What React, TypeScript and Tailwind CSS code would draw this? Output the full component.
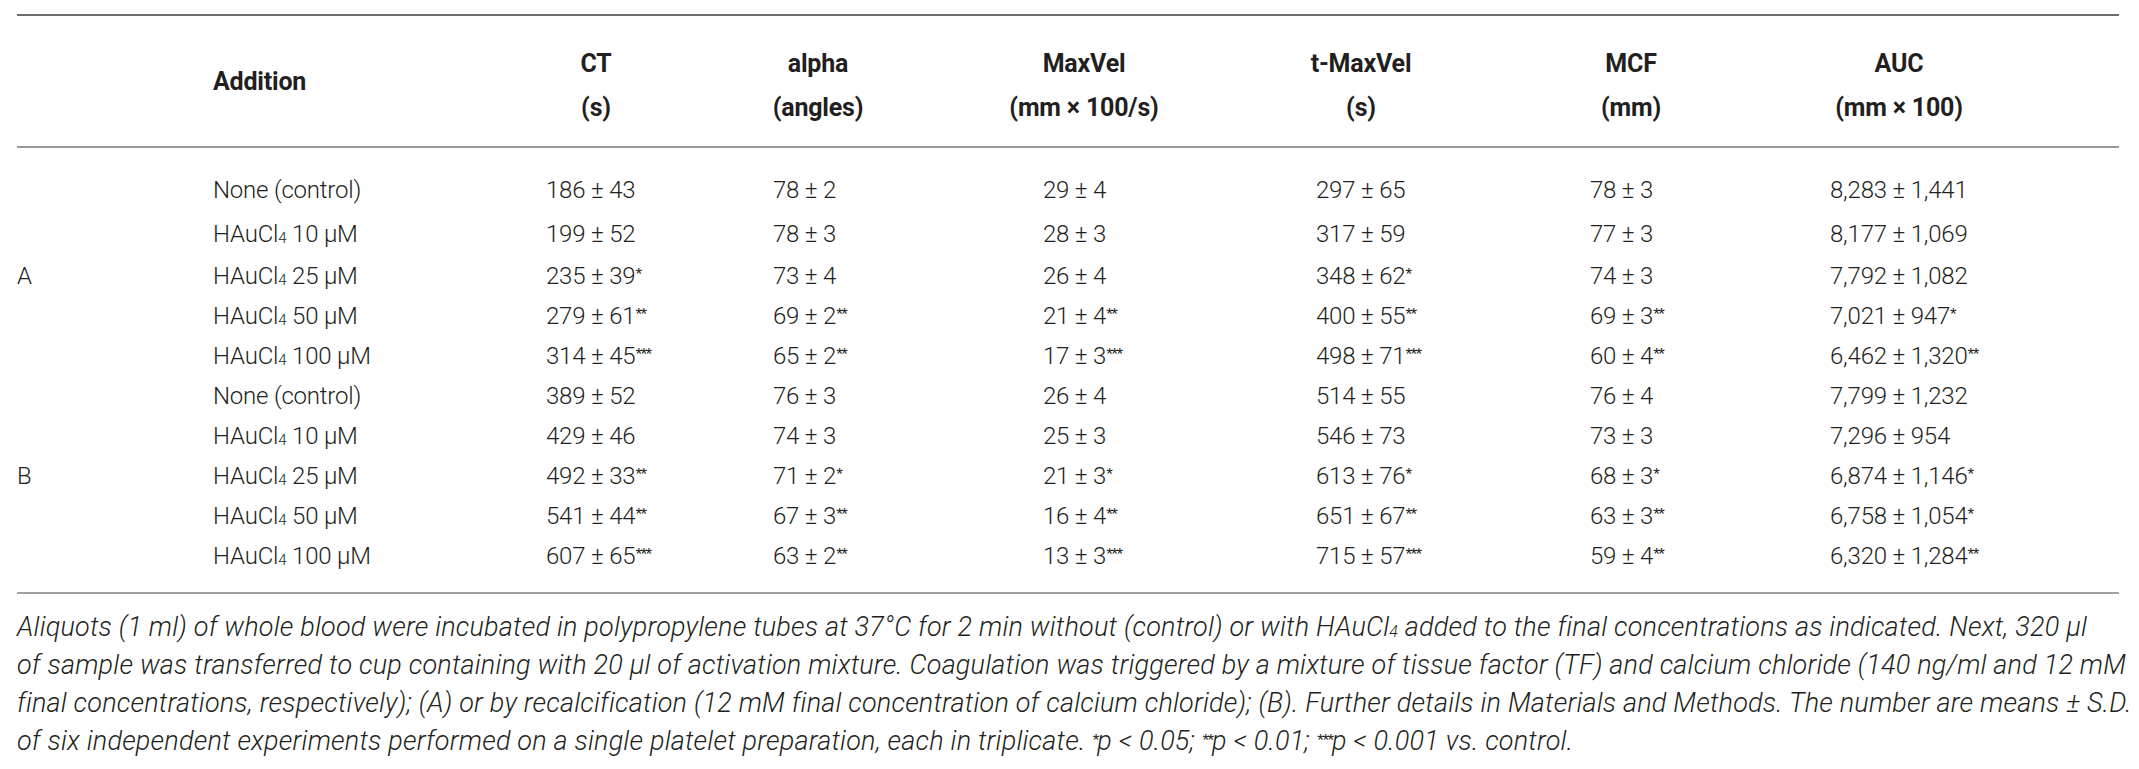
const font = { fontFamily: 'Roboto, "Liberation Sans", Arial, sans-serif' };

type Cell = [string, string?];

type Row = {
    group?: string;
    conc?: string;
    cells: Cell[];
    tall?: boolean;
};

const rows: Row[] = [
    { cells: [['186 ± 43'], ['78 ± 2'], ['29 ± 4'], ['297 ± 65'], ['78 ± 3'], ['8,283 ± 1,441']], tall: true },
    { conc: '10', cells: [['199 ± 52'], ['78 ± 3'], ['28 ± 3'], ['317 ± 59'], ['77 ± 3'], ['8,177 ± 1,069']], tall: true },
    { group: 'A', conc: '25', cells: [['235 ± 39', '*'], ['73 ± 4'], ['26 ± 4'], ['348 ± 62', '*'], ['74 ± 3'], ['7,792 ± 1,082']] },
    { conc: '50', cells: [['279 ± 61', '**'], ['69 ± 2', '**'], ['21 ± 4', '**'], ['400 ± 55', '**'], ['69 ± 3', '**'], ['7,021 ± 947', '*']] },
    { conc: '100', cells: [['314 ± 45', '***'], ['65 ± 2', '**'], ['17 ± 3', '***'], ['498 ± 71', '***'], ['60 ± 4', '**'], ['6,462 ± 1,320', '**']] },
    { cells: [['389 ± 52'], ['76 ± 3'], ['26 ± 4'], ['514 ± 55'], ['76 ± 4'], ['7,799 ± 1,232']] },
    { conc: '10', cells: [['429 ± 46'], ['74 ± 3'], ['25 ± 3'], ['546 ± 73'], ['73 ± 3'], ['7,296 ± 954']] },
    { group: 'B', conc: '25', cells: [['492 ± 33', '**'], ['71 ± 2', '*'], ['21 ± 3', '*'], ['613 ± 76', '*'], ['68 ± 3', '*'], ['6,874 ± 1,146', '*']] },
    { conc: '50', cells: [['541 ± 44', '**'], ['67 ± 3', '**'], ['16 ± 4', '**'], ['651 ± 67', '**'], ['63 ± 3', '**'], ['6,758 ± 1,054', '*']] },
    { conc: '100', cells: [['607 ± 65', '***'], ['63 ± 2', '**'], ['13 ± 3', '***'], ['715 ± 57', '***'], ['59 ± 4', '**'], ['6,320 ± 1,284', '**']] },
];

const cols = 'grid grid-cols-[196px_333px_227px_270px_273px_274px_240px_289px]';

const heads: [string, string, string][] = [
    ['CT', '(s)', 'w-[100px]'],
    ['alpha', '(angles)', 'w-[90px]'],
    ['MaxVel', '(mm × 100/s)', 'w-[82px]'],
    ['t-MaxVel', '(s)', 'w-[90px]'],
    ['MCF', '(mm)', 'w-[82px]'],
    ['AUC', '(mm × 100)', 'w-[138px]'],
];

function Sub4({ size = 'text-[15px]' }: { size?: string }) {
    return <sub className={`${size} relative top-[1px]`}>4</sub>;
}

function Star({ s }: { s: string }) {
    return (
        <sup className="text-[17px] relative -top-[4px] tracking-[-1.5px]" style={{ fontFamily: '"Liberation Sans", Arial, sans-serif' }}>
            {s}
        </sup>
    );
}

export default function App() {
    return (
        <div className="min-h-screen bg-white text-[#231f20] pt-[14px] pl-[17px]" style={font}>
            <div className="w-[2102px]">
                {/* Header */}
                <div className={`${cols} border-t-2 border-b-2 border-t-[#6e6e6e] border-b-[#9a9a9a] h-[134px] items-center text-[25px] font-bold tracking-[-0.2px]`}>
                    <div />
                    <div className="pt-[2px]">Addition</div>
                    {heads.map(([a, b, w]) => (
                        <div key={a} className={`${w} flex flex-col items-center gap-[14px] pt-[10px] leading-[30px] whitespace-nowrap`}>
                            <span>{a}</span>
                            <span>{b}</span>
                        </div>
                    ))}
                </div>

                {/* Body */}
                <div className="pt-[20px] pb-[16px] border-b-2 border-[#a0a0a0] text-[24px] font-light tracking-[-0.2px]">
                    {rows.map((r, i) => (
                        <div key={i} className={`${cols} items-center ${r.tall ? 'h-[44px]' : 'h-[40px]'}`}>
                            <div>{r.group ?? ''}</div>
                            <div className="whitespace-nowrap">
                                {r.conc ? (
                                    <>
                                        HAuCl<Sub4 /> {r.conc} μM
                                    </>
                                ) : (
                                    'None (control)'
                                )}
                            </div>
                            {r.cells.map(([v, s], j) => (
                                <div key={j} className="whitespace-nowrap">
                                    {v}
                                    {s && <Star s={s} />}
                                </div>
                            ))}
                        </div>
                    ))}
                </div>

                {/* Footnote */}
                <p className="pt-[14px] text-[27px] italic font-light leading-[38px] tracking-[0.2px] whitespace-nowrap">
                    Aliquots (1 ml) of whole blood were incubated in polypropylene tubes at 37°C for 2 min without (control) or with HAuCl<Sub4 size="text-[16px]" /> added to the final concentrations as indicated. Next, 320 μl
                    <br />
                    of sample was transferred to cup containing with 20 μl of activation mixture. Coagulation was triggered by a mixture of tissue factor (TF) and calcium chloride (140 ng/ml and 12 mM
                    <br />
                    final concentrations, respectively); (A) or by recalcification (12 mM final concentration of calcium chloride); (B). Further details in Materials and Methods. The number are means ± S.D.
                    <br />
                    of six independent experiments performed on a single platelet preparation, each in triplicate. <Star s="*" />p &lt; 0.05; <Star s="**" />p &lt; 0.01; <Star s="***" />p &lt; 0.001 vs. control.
                </p>
            </div>
        </div>
    );
}
